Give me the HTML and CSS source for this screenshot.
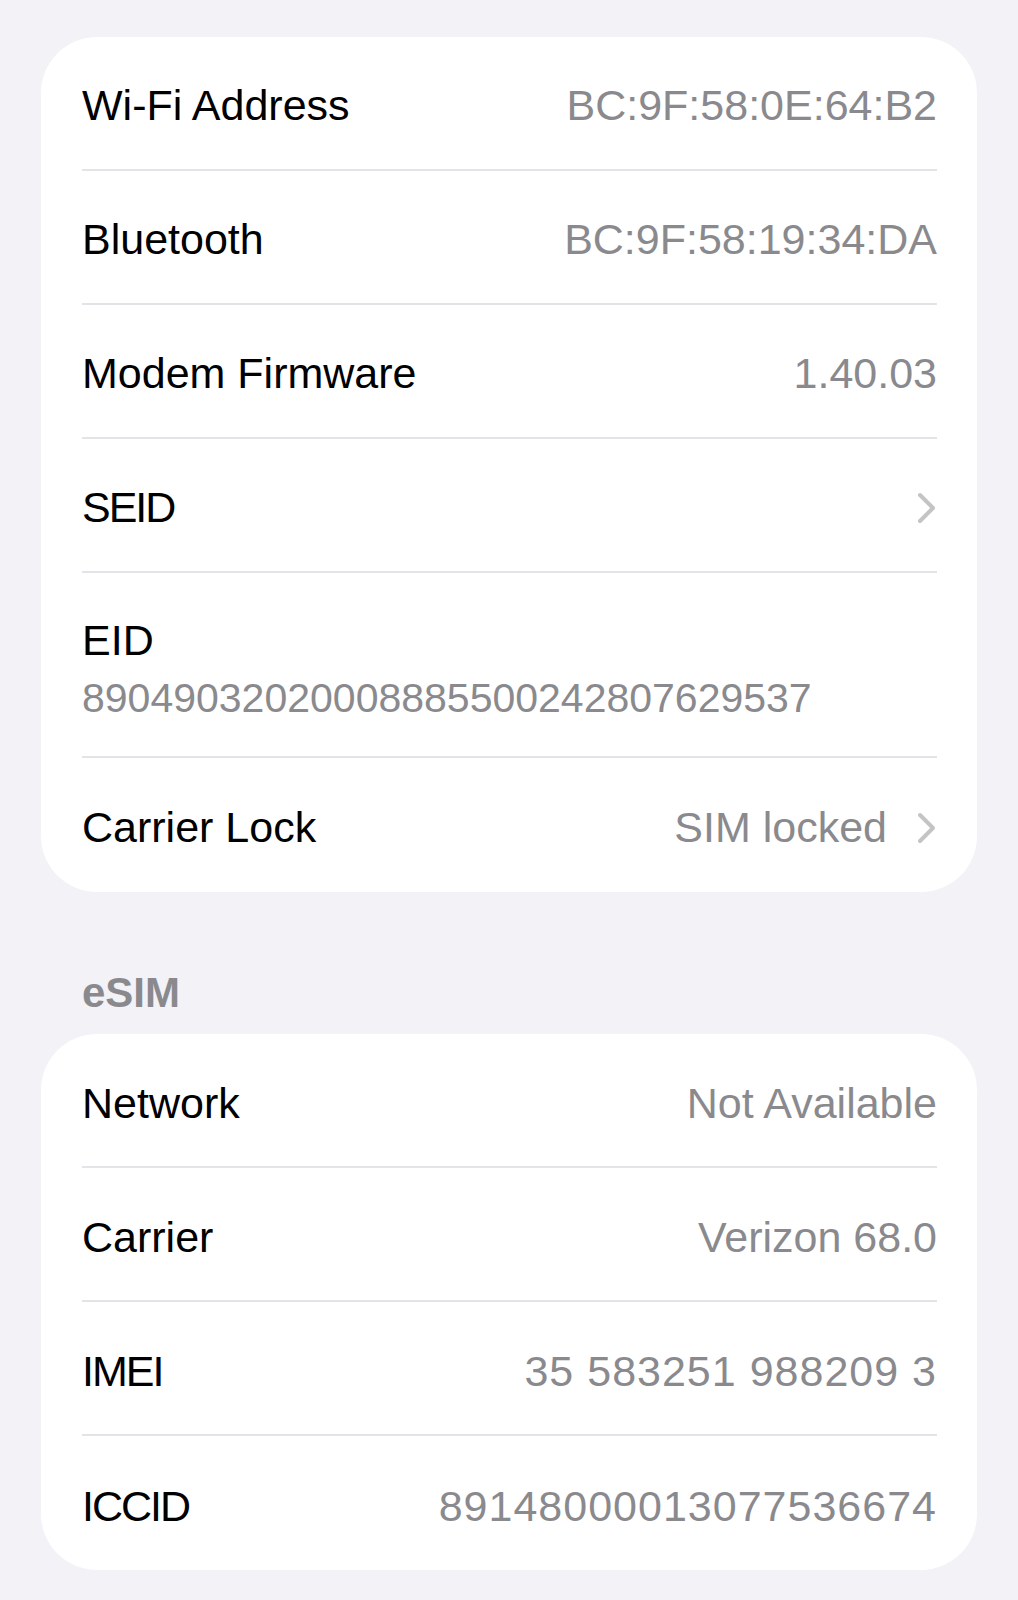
FILE: index.html
```html
<!DOCTYPE html>
<html lang="en">
<head>
    <meta charset="UTF-8">
    <meta name="viewport" content="width=device-width, initial-scale=1.0">
    <title>About</title>
    <link rel="stylesheet" href="styles.css">
</head>
<body>

    <div class="page">
        <!-- Grupo principal de información del dispositivo -->
        <div class="group">
            <div class="row">
                <span class="label">Wi-Fi Address</span>
                <span class="value">BC:9F:58:0E:64:B2</span>
            </div>
            <div class="row">
                <span class="label">Bluetooth</span>
                <span class="value">BC:9F:58:19:34:DA</span>
            </div>
            <div class="row">
                <span class="label">Modem Firmware</span>
                <span class="value">1.40.03</span>
            </div>
            <div class="row">
                <span class="label caps">SEID</span>
                <svg class="chevron" viewBox="0 0 20 32" width="20" height="32">
                    <path d="M3 3 L16 16 L3 29" />
                </svg>
            </div>
            <div class="row row-stacked">
                <span class="label">EID</span>
                <span class="subvalue">89049032020008885500242807629537</span>
            </div>
            <div class="row">
                <span class="label">Carrier Lock</span>
                <span class="value value-link">SIM locked</span>
                <svg class="chevron" viewBox="0 0 20 32" width="20" height="32">
                    <path d="M3 3 L16 16 L3 29" />
                </svg>
            </div>
        </div>

        <!-- Sección eSIM -->
        <div class="section-title">eSIM</div>
        <div class="group">
            <div class="row">
                <span class="label">Network</span>
                <span class="value">Not Available</span>
            </div>
            <div class="row">
                <span class="label">Carrier</span>
                <span class="value">Verizon 68.0</span>
            </div>
            <div class="row">
                <span class="label caps">IMEI</span>
                <span class="value digits">35 583251 988209 3</span>
            </div>
            <div class="row">
                <span class="label caps">ICCID</span>
                <span class="value digits">89148000013077536674</span>
            </div>
        </div>
    </div>

</body>
</html>
```

FILE: styles.css
```css
/* Fondo general estilo ajustes de iOS */
body {
    margin: 0;
    background-color: #f2f2f7;
    font-family: 'Liberation Sans', Arial, sans-serif;
    color: #000;
}

.page {
    padding: 37px 41px 30px 41px;
}

/* Tarjeta blanca con esquinas redondeadas */
.group {
    background-color: #fff;
    border-radius: 56px;
    padding: 0 40px 0 41px;
}

/* Cada fila de la tarjeta */
.row {
    display: flex;
    align-items: center;
    box-sizing: border-box;
    height: 134px;
    padding-top: 6px;
    border-bottom: 2px solid #e4e4e8;
}

.row:last-child {
    border-bottom: none;
}

/* Fila con el valor debajo de la etiqueta */
.row-stacked {
    flex-direction: column;
    align-items: flex-start;
    justify-content: flex-start;
    height: 185px;
    padding-top: 42px;
    gap: 7px;
}

.label {
    font-size: 43px;
    line-height: 1.2;
    flex: 1;
}

.row-stacked .label {
    flex: none;
}

/* Mayúsculas algo más juntas, como en la fuente del sistema */
.caps {
    letter-spacing: -2px;
}

.value {
    font-size: 43px;
    line-height: 1.2;
    color: #8a8a8e;
    text-align: right;
}

.digits {
    letter-spacing: 1px;
}

.value-link {
    margin-right: 30px;
}

.subvalue {
    font-size: 41px;
    line-height: 1.2;
    color: #8a8a8e;
}

/* Flecha gris de navegación */
.chevron {
    flex: none;
    display: block;
}

.chevron path {
    fill: none;
    stroke: #c4c4c7;
    stroke-width: 4;
    stroke-linecap: round;
    stroke-linejoin: round;
}

/* Título de sección */
.section-title {
    font-size: 42px;
    font-weight: bold;
    line-height: 1.2;
    color: #8a8a8e;
    padding-left: 41px;
    margin: 76px 0 16px 0;
}
```
